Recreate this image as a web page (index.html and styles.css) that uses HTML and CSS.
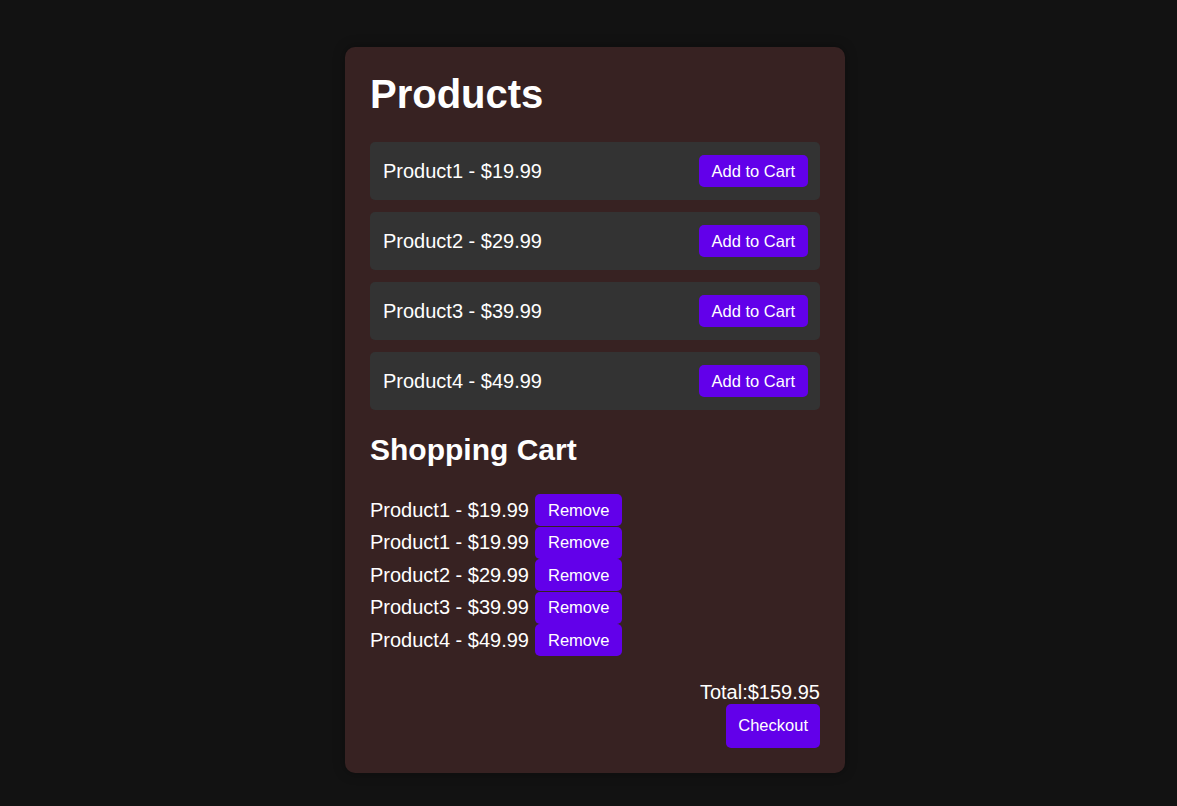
FILE: index.html
```html
<!DOCTYPE html>
<html>
<head>
<meta charset="utf-8">
<link rel="stylesheet" href="styles.css">
</head>
<body>
<div class="card">
  <h1 class="title">Products</h1>
  <div class="products">
    <div class="product"><span>Product1 - $19.99</span><button class="btn add">Add to Cart</button></div>
    <div class="product"><span>Product2 - $29.99</span><button class="btn add">Add to Cart</button></div>
    <div class="product"><span>Product3 - $39.99</span><button class="btn add">Add to Cart</button></div>
    <div class="product"><span>Product4 - $49.99</span><button class="btn add">Add to Cart</button></div>
  </div>
  <h2 class="subtitle">Shopping Cart</h2>
  <div class="cart">
    <div class="cart-row"><span>Product1 - $19.99</span><button class="btn remove">Remove</button></div>
    <div class="cart-row"><span>Product1 - $19.99</span><button class="btn remove">Remove</button></div>
    <div class="cart-row"><span>Product2 - $29.99</span><button class="btn remove">Remove</button></div>
    <div class="cart-row"><span>Product3 - $39.99</span><button class="btn remove">Remove</button></div>
    <div class="cart-row"><span>Product4 - $49.99</span><button class="btn remove">Remove</button></div>
  </div>
  <div class="summary">
    <div class="total">Total:$159.95</div>
    <button class="btn checkout">Checkout</button>
  </div>
</div>
</body>
</html>
```

FILE: styles.css
```css
html, body {
  margin: 0;
  padding: 0;
}
body {
  background: #121212;
  color: #ffffff;
  font-family: "Liberation Sans", Arial, sans-serif;
  min-height: 806px;
  box-sizing: border-box;
  padding-left: 13px;
  display: flex;
  justify-content: center;
  align-items: flex-start;
}
.card {
  margin-top: 47px;
  width: 450px;
  padding: 25px;
  background: #372222;
  border-radius: 10px;
  box-shadow: 0 0 12px rgba(0, 0, 0, 0.35);
}
.title {
  margin: 0 0 25px;
  font-size: 40px;
  font-weight: bold;
  line-height: 45px;
}
.products {
  display: flex;
  flex-direction: column;
  gap: 12px;
}
.product {
  display: flex;
  align-items: center;
  justify-content: space-between;
  height: 58px;
  box-sizing: border-box;
  padding: 0 12px 0 13px;
  background: #333333;
  border-radius: 5px;
  font-size: 20px;
}
.btn {
  border: none;
  background: #6200ea;
  color: #ffffff;
  font-family: "Liberation Sans", Arial, sans-serif;
  font-size: 16.5px;
  border-radius: 5px;
  cursor: pointer;
}
.add {
  height: 32px;
  padding: 0 13px;
}
.subtitle {
  margin: 23px 0 27px;
  font-size: 30px;
  font-weight: bold;
  line-height: 34px;
}
.cart {
  display: flex;
  flex-direction: column;
}
.cart-row {
  display: flex;
  align-items: center;
  gap: 6px;
  height: 32.5px;
  font-size: 20px;
}
.remove {
  height: 32px;
  padding: 0 13px;
}
.summary {
  margin-top: 24px;
  display: flex;
  flex-direction: column;
  align-items: flex-end;
}
.total {
  font-size: 20px;
  line-height: 23px;
}
.checkout {
  height: 44px;
  padding: 0 12px;
}
```
